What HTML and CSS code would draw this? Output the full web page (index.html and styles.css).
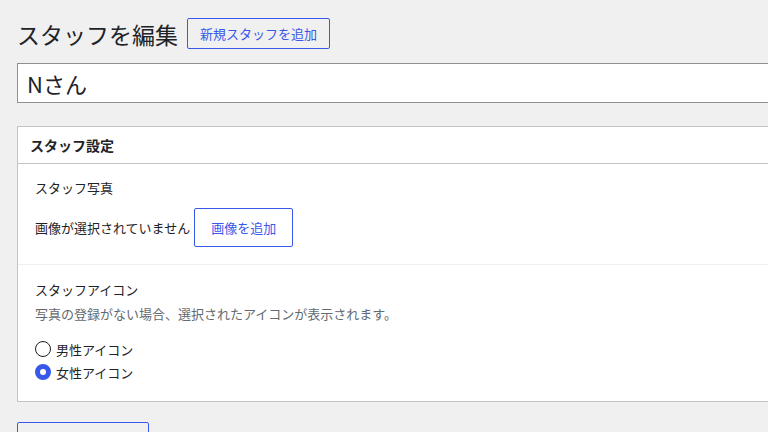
FILE: index.html
```html
<!DOCTYPE html>
<html lang="ja">
<head>
    <meta charset="UTF-8">
    <meta name="viewport" content="width=device-width, initial-scale=1.0">
    <title>スタッフを編集</title>
    <link rel="stylesheet" href="styles.css">
</head>
<body>
    <div class="wrap">
        <div class="page-header">
            <h1>スタッフを編集</h1>
            <a class="page-title-action" href="#">新規スタッフを追加</a>
        </div>

        <form method="post" action="#">
            <input type="text" id="title" name="post_title" value="Nさん">

            <div class="postbox">
                <h2 class="hndle">スタッフ設定</h2>
                <div class="inside">
                    <div class="field">
                        <p class="field-label">スタッフ写真</p>
                        <div class="image-row">
                            <span>画像が選択されていません</span>
                            <button type="button" class="button">画像を追加</button>
                        </div>
                    </div>

                    <div class="field">
                        <p class="field-label">スタッフアイコン</p>
                        <p class="description">写真の登録がない場合、選択されたアイコンが表示されます。</p>
                        <label class="radio">
                            <input type="radio" name="staff_icon" value="male">
                            <span>男性アイコン</span>
                        </label>
                        <label class="radio">
                            <input type="radio" name="staff_icon" value="female" checked>
                            <span>女性アイコン</span>
                        </label>
                    </div>
                </div>
            </div>

            <button type="submit" class="button button-save">更新</button>
        </form>
    </div>
</body>
</html>
```

FILE: styles.css
```css
body {
    margin: 0;
    padding: 0;
    background: #f0f0f1;
    color: #1d2327;
    font-family: "Noto Sans CJK JP", "Noto Sans", sans-serif;
    font-size: 13px;
    overflow: hidden;
}

.wrap {
    width: 1100px;
    padding: 18px 0 0 17px;
}

.page-header {
    display: flex;
    align-items: center;
    gap: 9px;
    height: 31px;
}

h1 {
    margin: 0;
    font-size: 23px;
    font-weight: 400;
    line-height: 30px;
}

.page-title-action {
    display: inline-flex;
    align-items: center;
    height: 29px;
    padding: 0 12px;
    border: 1px solid #3858e9;
    border-radius: 2px;
    color: #3858e9;
    font-size: 13px;
    text-decoration: none;
}

#title {
    display: block;
    width: 100%;
    height: 40px;
    margin: 14px 0 23px;
    padding: 0 9px;
    box-sizing: border-box;
    border: 1px solid #8c8f94;
    border-radius: 0;
    background: #fff;
    color: #1d2327;
    font-family: inherit;
    font-size: 22px;
}

.postbox {
    background: #fff;
    border: 1px solid #c3c4c7;
}

.hndle {
    margin: 0;
    padding: 0 12px;
    height: 36px;
    line-height: 36px;
    border-bottom: 1px solid #c3c4c7;
    font-size: 14px;
    font-weight: 700;
}

.field {
    padding: 14px 17px 17px;
}

.field + .field {
    border-top: 1px solid #f0f0f1;
    padding-top: 15px;
    padding-bottom: 16px;
}

.field-label {
    margin: 0;
    line-height: 20px;
    font-size: 13px;
    font-weight: 400;
    color: #1d2327;
}

.image-row {
    display: flex;
    align-items: center;
    gap: 4px;
    margin-top: 10px;
}

.button {
    height: 39px;
    padding: 0 16px;
    border: 1px solid #3858e9;
    border-radius: 2px;
    background: #fff;
    color: #3858e9;
    font-family: inherit;
    font-size: 13px;
    cursor: pointer;
}

.description {
    margin: 4px 0 15px;
    line-height: 20px;
    color: #646970;
}

.radio {
    display: flex;
    align-items: center;
    gap: 5px;
    height: 20px;
    margin-bottom: 3px;
}

.radio input {
    appearance: none;
    width: 16px;
    height: 16px;
    margin: 0;
    border: 1.5px solid #1e1e1e;
    border-radius: 50%;
    box-sizing: border-box;
    background: #fff;
}

.radio input:checked {
    border: 5px solid #3858e9;
}

/* 保存ボタン: 上端だけ画面に入る */
.button-save {
    margin-top: 20px;
    width: 132px;
    height: 48px;
    background: transparent;
}
```
